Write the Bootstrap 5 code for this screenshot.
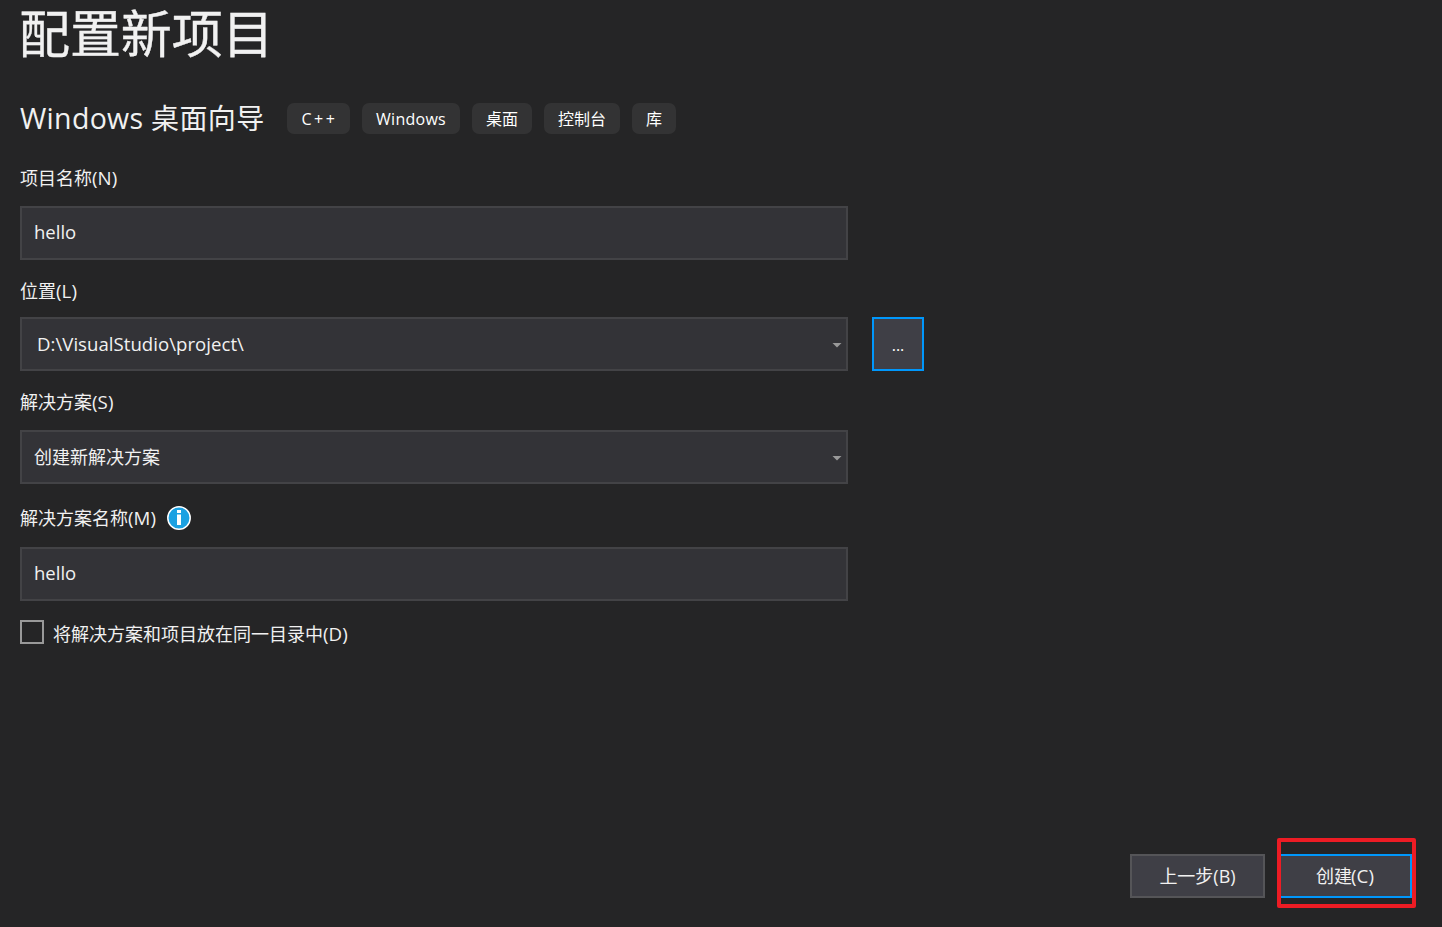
<!DOCTYPE html>
<html lang="zh-CN">
<head>
<meta charset="utf-8">
<meta name="viewport" content="width=device-width, initial-scale=1">
<title>配置新项目</title>
<link href="https://cdn.jsdelivr.net/npm/bootstrap@5.3.0/dist/css/bootstrap.min.css" rel="stylesheet">
<style>
body{background:#252526;color:#f1f1f1;font-family:"Open Sans","Noto Sans CJK SC",sans-serif;font-size:18px;line-height:24px;overflow:hidden}
.wizard{height:927px;padding:0 26px 19px 20px}
.page-title{font-size:51px;line-height:67px;height:70px;font-weight:400;letter-spacing:-.1px;margin-left:-1px;-webkit-text-stroke:.4px #f1f1f1}
.template-row{height:31px;margin-top:33px}
.template-name{font-size:28px;line-height:31px;width:267px;font-weight:400}
.latin-lg{font-size:28.5px;letter-spacing:.3px}
.cjk-lg{letter-spacing:.4px}
.tag{height:31px;border-radius:7px;background:#333334;font-size:16px;line-height:32px;margin-right:12px;color:#fff}
.t-cpp{letter-spacing:2.6px;margin-right:-2px}
.t-win{letter-spacing:.25px}
.field-label{height:24px;white-space:nowrap}
.key{letter-spacing:.1px;font-size:18.7px;line-height:20px}
.field-box{width:828px;height:54px;background:#333337;border:2px solid #434346;padding:0 4.5px 0 12px;color:#f1f1f1}
.field-box svg{margin-top:2px}
.name-value{font-size:18.5px;padding-bottom:2px}
.path-value{font-size:18.6px;letter-spacing:.03px;padding-left:3px}
.browse{width:52px;height:54px;margin-left:24px;background:#3f3f46;border:2px solid #0097fb;color:#fff;font-size:16px;padding:2px 0 0}
.check-box{width:24px;height:24px;border:2px solid #999}
.check-label{height:24px;margin-left:9px;line-height:28px}
.action{height:44px;background:#3f3f46;border:2px solid #555558;border-radius:0;color:#f1f1f1;font-size:18px;line-height:24px}
.back{width:135px;margin-right:12px;margin-top:6px}
.highlight{width:139px;height:70px;border:4px solid #ed1c24;border-radius:2px;padding-top:6px}
.create{width:131px;border-color:#0097fb;border-left:0}
.create span{margin-left:-1px}
</style>
</head>
<body>
<main class="wizard d-flex flex-column">
  <h1 class="page-title mb-0">配置新项目</h1>
  <div class="template-row d-flex align-items-center">
    <h2 class="template-name mb-0 text-nowrap"><span class="latin-lg">Windows </span><span class="cjk-lg">桌面向导</span></h2>
    <span class="tag d-flex justify-content-center" style="width:63px"><span class="t-cpp">C++</span></span>
    <span class="tag d-flex justify-content-center" style="width:98px"><span class="t-win">Windows</span></span>
    <span class="tag d-flex justify-content-center" style="width:60px">桌面</span>
    <span class="tag d-flex justify-content-center" style="width:76px">控制台</span>
    <span class="tag d-flex justify-content-center" style="width:44px">库</span>
  </div>
  <div class="field-label" style="margin-top:32px">项目名称<span class="key">(N)</span></div>
  <div class="field-box d-flex align-items-center" style="margin-top:16px"><span class="name-value">hello</span></div>
  <div class="field-label" style="margin-top:19px">位置<span class="key">(L)</span></div>
  <div class="d-flex" style="margin-top:14px">
    <div class="field-box d-flex align-items-center justify-content-between"><span class="path-value">D:\VisualStudio\project\</span>
      <svg width="10" height="6" viewBox="0 0 10 6"><path d="M.5 1h9L5 5.5z" fill="#999"/></svg></div>
    <button class="browse" type="button">...</button>
  </div>
  <div class="field-label" style="margin-top:19px">解决方案<span class="key">(S)</span></div>
  <div class="field-box d-flex align-items-center justify-content-between" style="margin-top:16px"><span>创建新解决方案</span>
    <svg width="10" height="6" viewBox="0 0 10 6"><path d="M.5 1h9L5 5.5z" fill="#999"/></svg></div>
  <div class="field-label d-flex align-items-center" style="margin-top:22px"><span style="width:147px">解决方案名称<span class="key">(M)</span></span>
    <svg width="24" height="24" viewBox="0 0 24 24"><circle cx="12" cy="12" r="11.2" fill="#1ba1e2" stroke="#fff" stroke-width="1.5"/><path d="M10 4h4v3h-4zM10 8.5h4V19h-4z" fill="#fff"/></svg></div>
  <div class="field-box d-flex align-items-center" style="margin-top:17px"><span class="name-value">hello</span></div>
  <div class="d-flex align-items-center" style="margin-top:19px"><span class="check-box"></span><span class="check-label text-nowrap">将解决方案和项目放在同一目录中<span class="key">(D)</span></span></div>
  <div class="d-flex justify-content-end align-items-center mt-auto">
    <button class="action back p-0" type="button">上一步(B)</button>
    <div class="highlight d-flex align-items-center"><button class="action create p-0" type="button"><span>创建<span class="key">(C)</span></span></button></div>
  </div>
</main>
<script src="https://cdn.jsdelivr.net/npm/bootstrap@5.3.0/dist/js/bootstrap.bundle.min.js"></script>
</body>
</html>
